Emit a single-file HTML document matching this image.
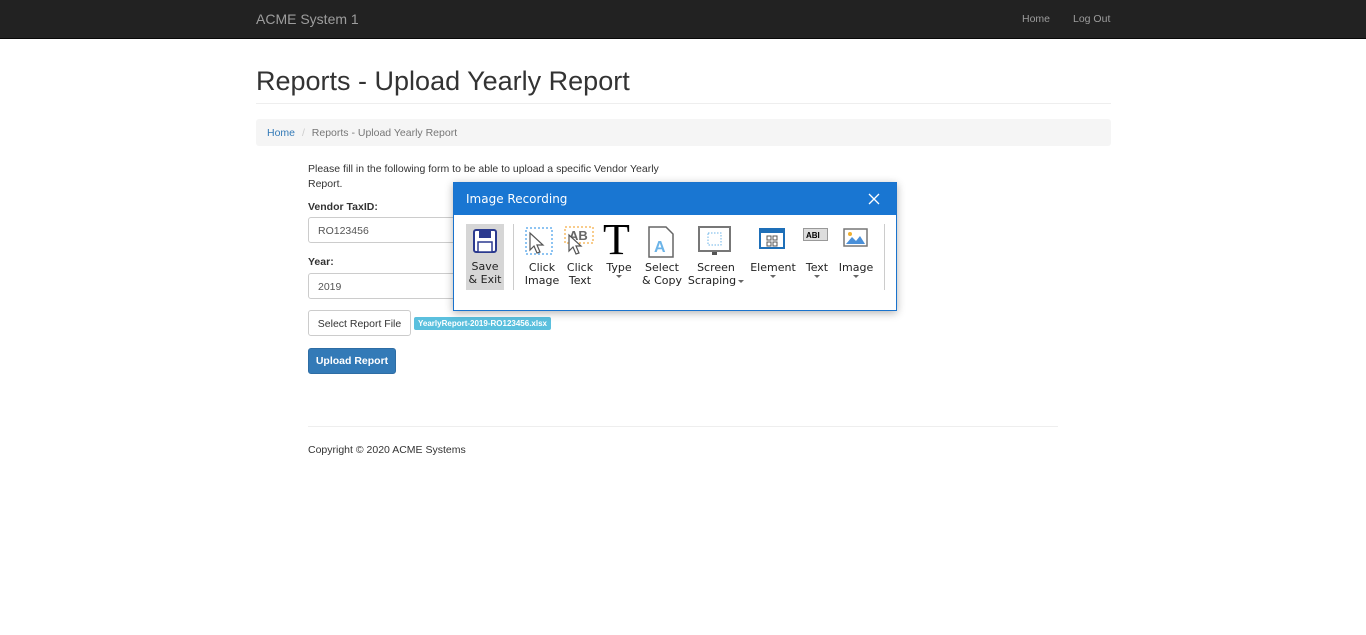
<!DOCTYPE html>
<html><head><style>
*{box-sizing:border-box}
body{margin:0;width:1366px;height:635px;background:#fff;font-family:"Liberation Sans",Arial,sans-serif;font-size:10.5px;color:#333;position:relative;overflow:hidden}
.nav{position:absolute;left:0;top:0;width:1366px;height:39px;background:#222;border-bottom:1px solid #080808}
.abs{position:absolute}
.brand{left:256px;top:11px;font-size:14px;color:#9d9d9d}
.nl{top:13px;color:#9d9d9d;font-size:10.5px}
h1{position:absolute;left:256px;top:66px;margin:0;font-size:27px;font-weight:400;color:#333}
.hr1{left:256px;top:103px;width:855px;border-top:1px solid #eee}
.bc{left:256px;top:119px;width:855px;height:27px;background:#f5f5f5;border-radius:3px;padding:8px 11px;font-size:10.5px;color:#777}
.bc a{color:#337ab7}
.lbl{font-weight:bold;left:308px}
.inp{left:308px;width:360px;height:26px;border:1px solid #ccc;border-radius:3px;padding:7px 9px;font-size:10.5px;color:#555}
.btn{border:1px solid #ccc;border-radius:3px;background:#fff;font-size:10.5px;color:#333;text-align:center}
.dlg{left:453px;top:182px;width:444px;height:129px;background:#fff;border:1px solid #1a73cd;box-shadow:0 2px 8px rgba(0,0,0,.3)}
.dh{height:32px;background:#1976d2;color:#fff;font-family:"DejaVu Sans",sans-serif;font-size:12px;padding:9px 12px}
.t{position:absolute;font-family:"DejaVu Sans",sans-serif;font-size:11px;color:#222;text-align:center;line-height:13px;top:78px}
.car{display:block;margin:1px auto 0;width:0;height:0;border-left:3px solid transparent;border-right:3px solid transparent;border-top:3px solid #666}
</style></head><body>
<div class="nav"></div>
<div class="abs brand">ACME System 1</div>
<div class="abs nl" style="left:1022px">Home</div>
<div class="abs nl" style="left:1073px">Log Out</div>
<h1>Reports - Upload Yearly Report</h1>
<div class="abs hr1"></div>
<div class="abs bc"><a>Home</a> <span style="color:#ccc;margin:0 4px">/</span> Reports - Upload Yearly Report</div>
<div class="abs" style="left:308px;top:162px;width:360px;line-height:15px">Please fill in the following form to be able to upload a specific Vendor Yearly Report.</div>
<div class="abs lbl" style="top:201px">Vendor TaxID:</div>
<div class="abs inp" style="top:217px">RO123456</div>
<div class="abs lbl" style="top:256px">Year:</div>
<div class="abs inp" style="top:273px">2019</div>
<div class="abs btn" style="left:308px;top:310px;width:103px;height:26px;padding-top:7px">Select Report File</div>
<div class="abs" style="left:414px;top:317px;width:137px;height:13px;background:#5bc0de;border-radius:2px;color:#fff;font-size:8px;font-weight:bold;text-align:center;line-height:13px">YearlyReport-2019-RO123456.xlsx</div>
<div class="abs" style="left:308px;top:348px;width:88px;height:26px;background:#337ab7;border:1px solid #2e6da4;border-radius:3px;color:#fff;font-weight:bold;text-align:center;padding-top:6px">Upload Report</div>
<div class="abs" style="left:308px;top:426px;width:750px;border-top:1px solid #eee"></div>
<div class="abs" style="left:308px;top:444px">Copyright © 2020 ACME Systems</div>

<div class="abs dlg">
<div class="dh">Image Recording</div>
<svg class="abs" style="left:413px;top:9px" width="14" height="14"><path d="M2 2L12 12M12 2L2 12" stroke="#fff" stroke-width="1.3"/></svg>
<div class="abs" style="left:12px;top:41px;width:38px;height:66px;background:#d6d6d6"></div>
<svg class="abs" style="left:18px;top:45px" width="26" height="26"><rect x="2" y="2" width="22" height="22" rx="2" fill="#fff" stroke="#2b3a8f" stroke-width="2"/><rect x="7" y="2" width="12" height="8" fill="#2b3a8f"/><rect x="6" y="14" width="14" height="10" fill="#fff" stroke="#2b3a8f" stroke-width="1.5"/></svg>
<div class="t" style="left:12px;top:77px;width:38px">Save<br>&amp; Exit</div>
<div class="abs" style="left:59px;top:41px;height:66px;border-left:1px solid #ccc"></div>
<div class="abs" style="left:430px;top:41px;height:66px;border-left:1px solid #ccc"></div>
<svg class="abs" style="left:70px;top:43px" width="34" height="32"><rect x="2" y="2" width="26" height="26" fill="none" stroke="#1e88e5" stroke-dasharray="2 2"/><path d="M6 7L6 24L10 20L13 27L16 26L13 19L19 19Z" fill="#fff" stroke="#555" stroke-width="1.2"/></svg>
<div class="t" style="left:68px;width:40px">Click<br>Image</div>
<svg class="abs" style="left:110px;top:42px" width="32" height="32"><rect x="1" y="2" width="28" height="16" fill="none" stroke="#f09a1a" stroke-dasharray="2 2"/><text x="5" y="15" font-family="Liberation Sans" font-weight="bold" font-size="13" fill="#666">AB</text><path d="M5 10L5 26L9 22L12 29L15 28L12 21L17 21Z" fill="#fff" stroke="#555" stroke-width="1.2"/></svg>
<div class="t" style="left:108px;width:36px">Click<br>Text</div>
<div class="abs" style="left:149px;top:32px;font-family:'Liberation Serif',serif;font-size:44px;color:#000;line-height:50px">T</div>
<div class="t" style="left:146px;width:38px">Type<span class="car"></span></div>
<svg class="abs" style="left:193px;top:42px" width="28" height="34"><path d="M2 2H19L26 9V32H2Z" fill="#fff" stroke="#666" stroke-width="1.5"/><text x="7" y="27" font-family="Liberation Sans" font-size="16" font-weight="bold" fill="#6cb4e8">A</text></svg>
<div class="t" style="left:185px;width:46px">Select<br>&amp; Copy</div>
<svg class="abs" style="left:244px;top:43px" width="34" height="32"><rect x="1" y="1" width="31" height="24" fill="#fff" stroke="#777" stroke-width="2"/><rect x="10" y="7" width="13" height="12" fill="none" stroke="#6cb4e8" stroke-dasharray="1.5 1.5"/><rect x="14" y="26" width="5" height="3" fill="#555"/></svg>
<div class="t" style="left:232px;width:60px">Screen<br>Scraping<span style="display:inline-block;width:0;height:0;border-left:3px solid transparent;border-right:3px solid transparent;border-top:3px solid #666;vertical-align:middle;margin-left:2px"></span></div>
<svg class="abs" style="left:305px;top:45px" width="26" height="22"><rect x="1" y="1" width="24" height="19" fill="#fff" stroke="#1e6fb8" stroke-width="2"/><rect x="1" y="1" width="24" height="4" fill="#1e6fb8"/><rect x="8" y="8" width="4" height="4" fill="none" stroke="#555"/><rect x="14" y="8" width="4" height="4" fill="none" stroke="#555"/><rect x="8" y="14" width="4" height="4" fill="none" stroke="#555"/><rect x="14" y="14" width="4" height="4" fill="none" stroke="#555"/></svg>
<div class="t" style="left:294px;width:50px">Element<span class="car"></span></div>
<svg class="abs" style="left:349px;top:45px" width="26" height="14"><rect x="0.5" y="0.5" width="24" height="12" fill="#ddd" stroke="#999"/><text x="3" y="10" font-family="Liberation Sans" font-size="8" font-weight="bold" fill="#000">ABI</text></svg>
<div class="t" style="left:346px;width:34px">Text<span class="car"></span></div>
<svg class="abs" style="left:389px;top:45px" width="26" height="20"><rect x="1" y="1" width="23" height="17" fill="#fff" stroke="#777" stroke-width="1.5"/><path d="M3 16L9 9L13 13L17 8L22 16Z" fill="#4a90d9"/><circle cx="7" cy="6" r="2" fill="#f0b030"/></svg>
<div class="t" style="left:382px;width:40px">Image<span class="car"></span></div>
</div>
</body></html>
